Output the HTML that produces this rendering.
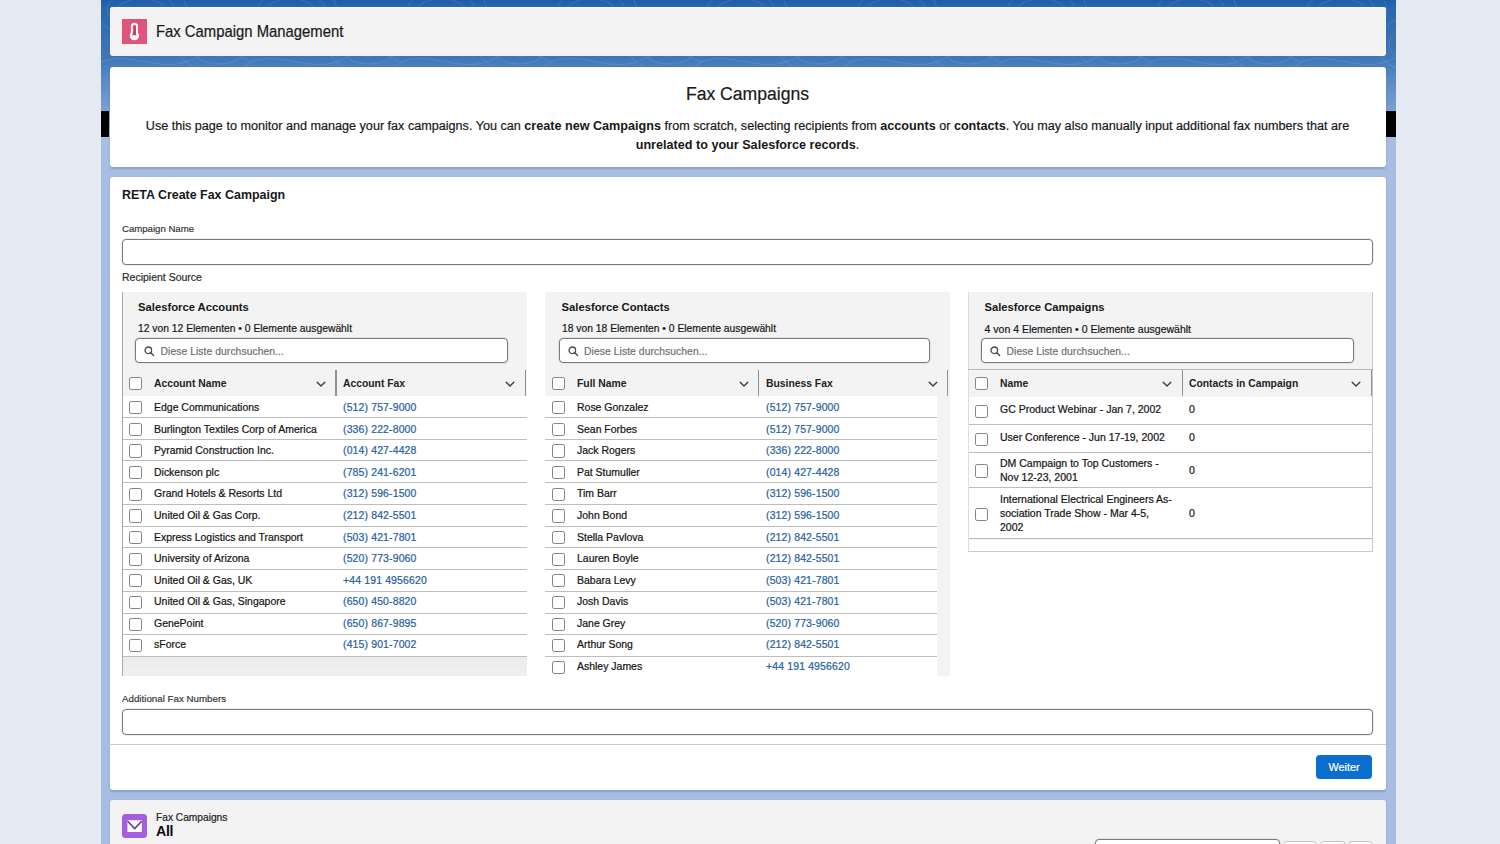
<!DOCTYPE html>
<html lang="de"><head><meta charset="utf-8"><title>Fax Campaign Management</title>
<style>
*{box-sizing:border-box;margin:0;padding:0}
html,body{width:1500px;height:844px;overflow:hidden;background:#e5e9f2;font-family:"Liberation Sans",sans-serif;color:#181818}
#root{position:relative;width:1500px;height:844px;overflow:hidden}
.abs{position:absolute}
.band{position:absolute;left:101px;top:0;width:1295px;height:844px;
 background:linear-gradient(180deg,#1f5ea8 0px,#2a67ae 8px,#3f76b7 57px,#4a80bd 67px,#7aa1d2 111px,#a7bde1 137px,#a7bde1 844px)}
.blk{position:absolute;top:111px;height:26px;background:#000}
.card{position:absolute;left:109.5px;width:1276.5px;border-radius:3px;background:#fff;box-shadow:0 1.5px 2px rgba(40,60,110,.22)}
.t{position:absolute;white-space:nowrap;transform:translateY(-50%);line-height:1;-webkit-text-stroke:0.2px currentColor}
.t b,.b{-webkit-text-stroke:0}
.b{font-weight:700;-webkit-text-stroke:0 !important}
.th{font-size:10.35px;color:#222}
.td{line-height:12px;font-size:10.48px;color:#161616;-webkit-text-stroke:0.22px currentColor}
.lk{line-height:12px;color:#27619f;font-size:10.48px;letter-spacing:.14px;-webkit-text-stroke:0.22px currentColor}
.ph{font-size:10.3px;letter-spacing:.08px;color:#6f6f6f}
.inp{position:absolute;background:#fff;border:1px solid #7b7b7b;border-radius:4px;box-shadow:0 0 0 0.5px rgba(120,120,120,.25)}
.cb{position:absolute;width:13px;height:13.2px;background:#fff;border:1.15px solid #858585;border-radius:2.2px}
.vd{position:absolute;width:1.4px;background:#919191}
.row{position:absolute;background:#fff;border-bottom:1px solid #bdbdbd}
.panel{position:absolute;background:#f3f3f3}
</style></head><body><div id="root">
<div class="band"></div>
<svg class="abs" style="left:101px;top:0" width="1295" height="112" viewBox="0 0 1295 112">
<defs><pattern id="topo" width="150" height="70" patternUnits="userSpaceOnUse">
<g fill="none" stroke="#fff" stroke-width="1" opacity=".11">
<ellipse cx="40" cy="10" rx="34" ry="18"/><ellipse cx="40" cy="10" rx="24" ry="11"/><ellipse cx="40" cy="10" rx="46" ry="26"/>
<ellipse cx="118" cy="44" rx="30" ry="20"/><ellipse cx="118" cy="44" rx="20" ry="12"/><ellipse cx="118" cy="44" rx="42" ry="29"/>
<path d="M0 62 C30 50 60 74 90 60 S130 52 150 62"/>
</g></pattern>
<linearGradient id="fade" x1="0" y1="0" x2="0" y2="1"><stop offset="0" stop-color="#fff"/><stop offset=".6" stop-color="#fff"/><stop offset="1" stop-color="#000"/></linearGradient>
<mask id="fm"><rect width="1295" height="112" fill="url(#fade)"/></mask></defs>
<rect width="1295" height="112" fill="url(#topo)" mask="url(#fm)"/></svg>
<div class="blk" style="left:101px;width:8px"></div>
<div class="blk" style="left:1386px;width:10px"></div>

<div class="card" style="top:7px;height:49px;background:#f3f3f3;box-shadow:inset 0 1px 0 #fbfbfb"></div>
<div class="abs" style="left:122px;top:19px;width:25px;height:25px;background:#e0537b"></div>
<svg class="abs" style="left:128px;top:22px" width="13" height="19" viewBox="0 0 13 19">
<rect x="2.9" y="0.7" width="7" height="14" rx="3.5" fill="#fff"/>
<ellipse cx="6.4" cy="13.7" rx="4.6" ry="4.5" fill="#fff"/>
<rect x="4.8" y="2.9" width="3.2" height="10.2" rx="1.6" fill="#c4406a"/>
<path d="M4.1 13.3 L5 11.3 H7.800 L8.7 13.3 Z" fill="#c4406a"/>
<path d="M4.8 5.2h1.500M4.800 7.200h1.500M4.800 9.200h1.500" stroke="#fff" stroke-width="0.55" opacity=".55"/>
</svg>
<div class="t" style="left:156px;top:31.6px;font-size:14.85px;color:#1a1a1a;transform:translateY(-50%) scaleY(1.05)">Fax Campaign Management</div>

<div class="card" style="top:67px;height:99.5px"></div>
<div class="t" style="left:109px;width:1277px;text-align:center;top:95.2px;font-size:17.6px;color:#1a1a1a">Fax Campaigns</div>
<div class="t" style="left:109px;width:1277px;text-align:center;top:126px;font-size:12.62px">Use this page to monitor and manage your fax campaigns. You can <b>create new Campaigns</b> from scratch, selecting recipients from <b>accounts</b> or <b>contacts</b>. You may also manually input additional fax numbers that are</div>
<div class="t" style="left:109px;width:1277px;text-align:center;top:144.5px;font-size:12.62px"><b>unrelated to your Salesforce records</b>.</div>

<div class="card" style="top:176.5px;height:613px"></div>
<div class="t b" style="left:122px;top:194.5px;font-size:12.45px">RETA Create Fax Campaign</div>
<div class="t" style="left:122px;top:229px;font-size:9.6px;color:#383838">Campaign Name</div>
<div class="inp" style="left:122px;top:239px;width:1251px;height:25.5px"></div>
<div class="t" style="left:122px;top:276.9px;font-size:10.5px;color:#2b2b2b">Recipient Source</div>

<div class="panel" style="left:122px;top:291.5px;width:405px;height:384.5px;border-left:1px solid #a9a9a9"></div>
<div class="abs" style="left:123px;top:657px;width:404px;height:19px;background:linear-gradient(180deg,#ebebeb,#f0f0f0)"></div>
<div class="t b" style="left:138px;top:308.2px;font-size:11.25px">Salesforce Accounts</div>
<div class="t" style="left:138px;top:329.2px;font-size:10.32px">12 von 12 Elementen • 0 Elemente ausgewählt</div>
<div class="inp" style="left:135px;top:337.8px;width:372.5px;height:25.3px"></div><svg class="abs" style="left:144.3px;top:345.5px" width="11" height="11" viewBox="0 0 11 11"><circle cx="4.3" cy="4.3" r="3.3" fill="none" stroke="#4a4a4a" stroke-width="1.3"/><path d="M6.7 6.7 L9.6 9.5" stroke="#4a4a4a" stroke-width="1.5" stroke-linecap="round"/></svg><div class="t ph" style="left:160.5px;top:352.3px">Diese Liste durchsuchen...</div>
<div class="cb" style="left:129px;top:376.8px"></div>
<div class="t b th" style="left:154px;top:383.7px">Account Name</div>
<svg class="abs" style="left:315.9px;top:380.5px" width="10" height="7" viewBox="0 0 10 7"><path d="M1.2 1.2 L5 5.0 L8.8 1.2" fill="none" stroke="#3d3d3d" stroke-width="1.4" stroke-linecap="round" stroke-linejoin="round"/></svg>
<div class="vd" style="left:335.45px;top:369.6px;height:26.4px"></div>
<div class="t b th" style="left:343px;top:383.7px">Account Fax</div>
<svg class="abs" style="left:504.9px;top:380.5px" width="10" height="7" viewBox="0 0 10 7"><path d="M1.2 1.2 L5 5.0 L8.8 1.2" fill="none" stroke="#3d3d3d" stroke-width="1.4" stroke-linecap="round" stroke-linejoin="round"/></svg>
<div class="vd" style="left:524.75px;top:369.6px;height:26.4px"></div>
<div class="row" style="left:123px;top:396.30px;width:404px;height:21.73px"></div>
<div class="cb" style="left:129px;top:401.2px"></div>
<div class="t td" style="left:154px;top:408.15px">Edge Communications</div>
<div class="t td lk" style="left:343px;top:408.15px">(512) 757-9000</div>
<div class="row" style="left:123px;top:418.03px;width:404px;height:21.73px"></div>
<div class="cb" style="left:129px;top:422.84px"></div>
<div class="t td" style="left:154px;top:429.72px">Burlington Textiles Corp of America</div>
<div class="t td lk" style="left:343px;top:429.72px">(336) 222-8000</div>
<div class="row" style="left:123px;top:439.76px;width:404px;height:21.73px"></div>
<div class="cb" style="left:129px;top:444.47px"></div>
<div class="t td" style="left:154px;top:451.29px">Pyramid Construction Inc.</div>
<div class="t td lk" style="left:343px;top:451.29px">(014) 427-4428</div>
<div class="row" style="left:123px;top:461.49px;width:404px;height:21.73px"></div>
<div class="cb" style="left:129px;top:466.11px"></div>
<div class="t td" style="left:154px;top:472.86px">Dickenson plc</div>
<div class="t td lk" style="left:343px;top:472.86px">(785) 241-6201</div>
<div class="row" style="left:123px;top:483.22px;width:404px;height:21.73px"></div>
<div class="cb" style="left:129px;top:487.74px"></div>
<div class="t td" style="left:154px;top:494.43px">Grand Hotels &amp; Resorts Ltd</div>
<div class="t td lk" style="left:343px;top:494.43px">(312) 596-1500</div>
<div class="row" style="left:123px;top:504.95px;width:404px;height:21.73px"></div>
<div class="cb" style="left:129px;top:509.38px"></div>
<div class="t td" style="left:154px;top:516.00px">United Oil &amp; Gas Corp.</div>
<div class="t td lk" style="left:343px;top:516.00px">(212) 842-5501</div>
<div class="row" style="left:123px;top:526.68px;width:404px;height:21.73px"></div>
<div class="cb" style="left:129px;top:531.02px"></div>
<div class="t td" style="left:154px;top:537.57px">Express Logistics and Transport</div>
<div class="t td lk" style="left:343px;top:537.57px">(503) 421-7801</div>
<div class="row" style="left:123px;top:548.41px;width:404px;height:21.73px"></div>
<div class="cb" style="left:129px;top:552.65px"></div>
<div class="t td" style="left:154px;top:559.14px">University of Arizona</div>
<div class="t td lk" style="left:343px;top:559.14px">(520) 773-9060</div>
<div class="row" style="left:123px;top:570.14px;width:404px;height:21.73px"></div>
<div class="cb" style="left:129px;top:574.29px"></div>
<div class="t td" style="left:154px;top:580.71px">United Oil &amp; Gas, UK</div>
<div class="t td lk" style="left:343px;top:580.71px">+44 191 4956620</div>
<div class="row" style="left:123px;top:591.87px;width:404px;height:21.73px"></div>
<div class="cb" style="left:129px;top:595.92px"></div>
<div class="t td" style="left:154px;top:602.28px">United Oil &amp; Gas, Singapore</div>
<div class="t td lk" style="left:343px;top:602.28px">(650) 450-8820</div>
<div class="row" style="left:123px;top:613.60px;width:404px;height:21.73px"></div>
<div class="cb" style="left:129px;top:617.56px"></div>
<div class="t td" style="left:154px;top:623.85px">GenePoint</div>
<div class="t td lk" style="left:343px;top:623.85px">(650) 867-9895</div>
<div class="row" style="left:123px;top:635.33px;width:404px;height:21.73px"></div>
<div class="cb" style="left:129px;top:639.2px"></div>
<div class="t td" style="left:154px;top:645.42px">sForce</div>
<div class="t td lk" style="left:343px;top:645.42px">(415) 901-7002</div>
<div class="panel" style="left:545px;top:291.5px;width:404.5px;height:384.5px"></div>
<div class="abs" style="left:545px;top:292px;width:404px;height:384px;overflow:hidden"><div class="abs" style="left:-545px;top:-292px">
<div class="t b" style="left:561.5px;top:308.2px;font-size:11.25px">Salesforce Contacts</div>
<div class="t" style="left:562.0px;top:329.2px;font-size:10.32px">18 von 18 Elementen • 0 Elemente ausgewählt</div>
<div class="inp" style="left:558.6px;top:337.8px;width:371.9px;height:25.3px"></div><svg class="abs" style="left:567.9px;top:345.5px" width="11" height="11" viewBox="0 0 11 11"><circle cx="4.3" cy="4.3" r="3.3" fill="none" stroke="#4a4a4a" stroke-width="1.3"/><path d="M6.7 6.7 L9.6 9.5" stroke="#4a4a4a" stroke-width="1.5" stroke-linecap="round"/></svg><div class="t ph" style="left:584.1px;top:352.3px">Diese Liste durchsuchen...</div>
<div class="cb" style="left:552px;top:376.8px"></div>
<div class="t b th" style="left:577px;top:383.7px">Full Name</div>
<svg class="abs" style="left:738.9px;top:380.5px" width="10" height="7" viewBox="0 0 10 7"><path d="M1.2 1.2 L5 5.0 L8.8 1.2" fill="none" stroke="#3d3d3d" stroke-width="1.4" stroke-linecap="round" stroke-linejoin="round"/></svg>
<div class="vd" style="left:757.8px;top:369.6px;height:26.4px"></div>
<div class="t b th" style="left:766px;top:383.7px">Business Fax</div>
<svg class="abs" style="left:927.9px;top:380.5px" width="10" height="7" viewBox="0 0 10 7"><path d="M1.2 1.2 L5 5.0 L8.8 1.2" fill="none" stroke="#3d3d3d" stroke-width="1.4" stroke-linecap="round" stroke-linejoin="round"/></svg>
<div class="vd" style="left:946.95px;top:369.6px;height:26.4px"></div>
<div class="row" style="left:545px;top:396.30px;width:392px;height:21.73px"></div>
<div class="cb" style="left:552px;top:401.2px"></div>
<div class="t td" style="left:577px;top:408.15px">Rose Gonzalez</div>
<div class="t td lk" style="left:766px;top:408.15px">(512) 757-9000</div>
<div class="row" style="left:545px;top:418.03px;width:392px;height:21.73px"></div>
<div class="cb" style="left:552px;top:422.84px"></div>
<div class="t td" style="left:577px;top:429.72px">Sean Forbes</div>
<div class="t td lk" style="left:766px;top:429.72px">(512) 757-9000</div>
<div class="row" style="left:545px;top:439.76px;width:392px;height:21.73px"></div>
<div class="cb" style="left:552px;top:444.47px"></div>
<div class="t td" style="left:577px;top:451.29px">Jack Rogers</div>
<div class="t td lk" style="left:766px;top:451.29px">(336) 222-8000</div>
<div class="row" style="left:545px;top:461.49px;width:392px;height:21.73px"></div>
<div class="cb" style="left:552px;top:466.11px"></div>
<div class="t td" style="left:577px;top:472.86px">Pat Stumuller</div>
<div class="t td lk" style="left:766px;top:472.86px">(014) 427-4428</div>
<div class="row" style="left:545px;top:483.22px;width:392px;height:21.73px"></div>
<div class="cb" style="left:552px;top:487.74px"></div>
<div class="t td" style="left:577px;top:494.43px">Tim Barr</div>
<div class="t td lk" style="left:766px;top:494.43px">(312) 596-1500</div>
<div class="row" style="left:545px;top:504.95px;width:392px;height:21.73px"></div>
<div class="cb" style="left:552px;top:509.38px"></div>
<div class="t td" style="left:577px;top:516.00px">John Bond</div>
<div class="t td lk" style="left:766px;top:516.00px">(312) 596-1500</div>
<div class="row" style="left:545px;top:526.68px;width:392px;height:21.73px"></div>
<div class="cb" style="left:552px;top:531.02px"></div>
<div class="t td" style="left:577px;top:537.57px">Stella Pavlova</div>
<div class="t td lk" style="left:766px;top:537.57px">(212) 842-5501</div>
<div class="row" style="left:545px;top:548.41px;width:392px;height:21.73px"></div>
<div class="cb" style="left:552px;top:552.65px"></div>
<div class="t td" style="left:577px;top:559.14px">Lauren Boyle</div>
<div class="t td lk" style="left:766px;top:559.14px">(212) 842-5501</div>
<div class="row" style="left:545px;top:570.14px;width:392px;height:21.73px"></div>
<div class="cb" style="left:552px;top:574.29px"></div>
<div class="t td" style="left:577px;top:580.71px">Babara Levy</div>
<div class="t td lk" style="left:766px;top:580.71px">(503) 421-7801</div>
<div class="row" style="left:545px;top:591.87px;width:392px;height:21.73px"></div>
<div class="cb" style="left:552px;top:595.92px"></div>
<div class="t td" style="left:577px;top:602.28px">Josh Davis</div>
<div class="t td lk" style="left:766px;top:602.28px">(503) 421-7801</div>
<div class="row" style="left:545px;top:613.60px;width:392px;height:21.73px"></div>
<div class="cb" style="left:552px;top:617.56px"></div>
<div class="t td" style="left:577px;top:623.85px">Jane Grey</div>
<div class="t td lk" style="left:766px;top:623.85px">(520) 773-9060</div>
<div class="row" style="left:545px;top:635.33px;width:392px;height:21.73px"></div>
<div class="cb" style="left:552px;top:639.2px"></div>
<div class="t td" style="left:577px;top:645.42px">Arthur Song</div>
<div class="t td lk" style="left:766px;top:645.42px">(212) 842-5501</div>
<div class="row" style="left:545px;top:657.06px;width:392px;height:21.73px"></div>
<div class="cb" style="left:552px;top:660.83px"></div>
<div class="t td" style="left:577px;top:666.99px">Ashley James</div>
<div class="t td lk" style="left:766px;top:666.99px">+44 191 4956620</div>
</div></div>
<div class="panel" style="left:968px;top:291.5px;width:405px;height:260.5px;border:1px solid #c9c9c9;border-top:none;border-left-color:#dcdcdc"></div>
<div class="t b" style="left:984.5px;top:308.2px;font-size:11.2px">Salesforce Campaigns</div>
<div class="t" style="left:984.5px;top:329.2px;font-size:10.52px">4 von 4 Elementen • 0 Elemente ausgewählt</div>
<div class="inp" style="left:981px;top:337.8px;width:372.5px;height:25.3px"></div><svg class="abs" style="left:990.3px;top:345.5px" width="11" height="11" viewBox="0 0 11 11"><circle cx="4.3" cy="4.3" r="3.3" fill="none" stroke="#4a4a4a" stroke-width="1.3"/><path d="M6.7 6.7 L9.6 9.5" stroke="#4a4a4a" stroke-width="1.5" stroke-linecap="round"/></svg><div class="t ph" style="left:1006.5px;top:352.3px">Diese Liste durchsuchen...</div>
<div class="abs" style="left:968px;top:369.3px;width:405px;height:1px;background:#b9b9b9"></div>
<div class="cb" style="left:975px;top:376.8px"></div>
<div class="t b th" style="left:1000px;top:383.7px">Name</div>
<svg class="abs" style="left:1161.9px;top:380.5px" width="10" height="7" viewBox="0 0 10 7"><path d="M1.2 1.2 L5 5.0 L8.8 1.2" fill="none" stroke="#3d3d3d" stroke-width="1.4" stroke-linecap="round" stroke-linejoin="round"/></svg>
<div class="vd" style="left:1182px;top:369.6px;height:26.4px"></div>
<div class="t b th" style="left:1189px;top:383.7px">Contacts in Campaign</div>
<svg class="abs" style="left:1350.9px;top:380.5px" width="10" height="7" viewBox="0 0 10 7"><path d="M1.2 1.2 L5 5.0 L8.8 1.2" fill="none" stroke="#3d3d3d" stroke-width="1.4" stroke-linecap="round" stroke-linejoin="round"/></svg>
<div class="vd" style="left:1370.8px;top:369.6px;height:26.4px"></div>
<div class="row" style="left:969px;top:396.5px;width:403px;height:28px"></div>
<div class="cb" style="left:975px;top:404.6px"></div>
<div class="t td" style="left:1000px;top:409.1px;font-size:10.52px">GC Product Webinar - Jan 7, 2002</div>
<div class="t td" style="left:1189px;top:409.1px;font-size:10.52px">0</div>
<div class="row" style="left:969px;top:424.5px;width:403px;height:28px"></div>
<div class="cb" style="left:975px;top:432.6px"></div>
<div class="t td" style="left:1000px;top:437.1px;font-size:10.52px">User Conference - Jun 17-19, 2002</div>
<div class="t td" style="left:1189px;top:437.1px;font-size:10.52px">0</div>
<div class="row" style="left:969px;top:452.5px;width:403px;height:35.6px"></div>
<div class="cb" style="left:975px;top:464.40000000000003px"></div>
<div class="t td" style="left:1000px;top:462.5px;font-size:10.52px">DM Campaign to Top Customers -</div>
<div class="t td" style="left:1000px;top:476.8px;font-size:10.52px">Nov 12-23, 2001</div>
<div class="t td" style="left:1189px;top:469.6px;font-size:10.52px">0</div>
<div class="row" style="left:969px;top:488.1px;width:403px;height:51.3px"></div>
<div class="cb" style="left:975px;top:507.85px"></div>
<div class="t td" style="left:1000px;top:498.7px;font-size:10.52px">International Electrical Engineers As-</div>
<div class="t td" style="left:1000px;top:513.0px;font-size:10.52px">sociation Trade Show - Mar 4-5,</div>
<div class="t td" style="left:1000px;top:527.3px;font-size:10.52px">2002</div>
<div class="t td" style="left:1189px;top:513.0px;font-size:10.52px">0</div>
<div class="abs" style="left:969px;top:539.5px;width:403px;height:11.5px;background:#fff"></div>
<div class="t" style="left:122px;top:699px;font-size:9.75px;color:#383838">Additional Fax Numbers</div>
<div class="inp" style="left:122px;top:709px;width:1251px;height:25.5px"></div>
<div class="abs" style="left:109px;top:744px;width:1277px;height:1px;background:#c9c9c9"></div>
<div class="abs" style="left:1316px;top:754.5px;width:56px;height:24.5px;border-radius:4px;background:#0b6fcf"></div>
<div class="t" style="left:1316px;width:56px;text-align:center;top:766.8px;font-size:10.8px;color:#fff">Weiter</div>

<div class="card" style="top:799.5px;height:60px;background:#f3f3f3"></div>
<div class="abs" style="left:122.3px;top:813.8px;width:24.7px;height:24.7px;border-radius:3.5px;background:#a45fe0"></div>
<svg class="abs" style="left:126px;top:819px" width="17" height="15" viewBox="0 0 17 15">
<rect x="1.4" y="1.3" width="14.5" height="11.7" rx="0.8" fill="#fff"/>
<path d="M1.6 2.2 L8.65 9.6 L15.7 2.2" fill="none" stroke="#5f3c9c" stroke-width="1.55" stroke-linejoin="miter"/></svg>
<div class="t" style="left:156px;top:817.7px;font-size:10.2px;color:#222">Fax Campaigns</div>
<div class="t b" style="left:156px;top:831.3px;font-size:14.2px;letter-spacing:-.35px;color:#0c0c0c">All</div>
<div class="inp" style="left:1095px;top:839px;width:185px;height:25px"></div>
<div class="inp" style="left:1283px;top:841px;width:34px;height:25px;border-color:#c2c2c2;box-shadow:none"></div>
<div class="inp" style="left:1320px;top:841px;width:26px;height:25px;border-color:#c2c2c2;box-shadow:none"></div>
<div class="inp" style="left:1348px;top:841px;width:25px;height:25px;border-color:#c2c2c2;box-shadow:none"></div>

</div></body></html>
